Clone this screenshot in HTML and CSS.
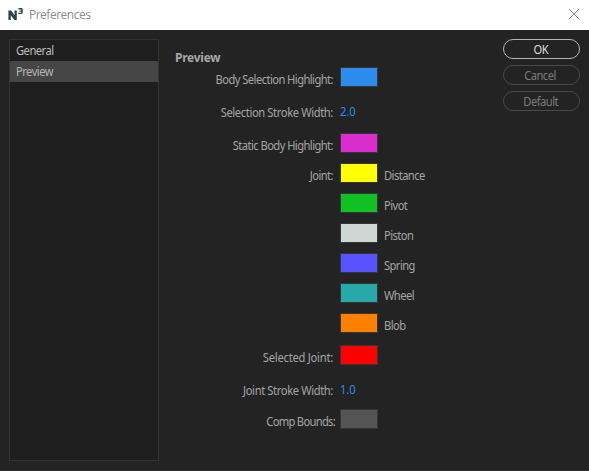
FILE: index.html
```html
<!DOCTYPE html>
<html lang="en">
<head>
<meta charset="utf-8">
<title>Preferences</title>
<link rel="stylesheet" href="styles.css">
</head>
<body>
<div class="window">
  <header class="titlebar">
    <svg class="logo" width="16" height="14" viewBox="0 0 16 14"><path d="M.4 3.4h2.8l3.3 4.8V3.4h2.3V13H6.2L2.8 8.2V13H.4z" fill="#2d444b"/><path d="M10.4 1.8h3.2l.4.5v1.3l-.6.5.6.5v1.3l-.4.5h-3.2M11.6 4.1h2" fill="none" stroke="#2d444b" stroke-width="1.4"/></svg>
    <h1 class="title">Preferences</h1>
    <svg class="close" width="12" height="12" viewBox="0 0 12 12"><path d="M1 1L11 11M11 1L1 11" fill="none" stroke="#888" stroke-width="1"/></svg>
  </header>
  <main class="content">
    <nav class="sidebar">
      <div class="item"><span class="narrow">General</span></div>
      <div class="item selected"><span class="narrow">Preview</span></div>
    </nav>
    <section class="panel">
      <h2 class="heading">Preview</h2>
      <div class="row gap13"><span class="label">Body Selection Highlight:</span><i class="swatch blue"></i></div>
      <div class="row gap13"><span class="label loose">Selection Stroke Width:</span><span class="value">2.0</span></div>
      <div class="row"><span class="label">Static Body Highlight:</span><i class="swatch magenta"></i></div>
      <div class="row"><span class="label">Joint:</span><i class="swatch yellow"></i><span class="name">Distance</span></div>
      <div class="row"><span class="label"></span><i class="swatch green"></i><span class="name">Pivot</span></div>
      <div class="row"><span class="label"></span><i class="swatch gray"></i><span class="name">Piston</span></div>
      <div class="row"><span class="label"></span><i class="swatch violet"></i><span class="name">Spring</span></div>
      <div class="row"><span class="label"></span><i class="swatch teal"></i><span class="name">Wheel</span></div>
      <div class="row gap12"><span class="label"></span><i class="swatch orange"></i><span class="name">Blob</span></div>
      <div class="row gap13"><span class="label looser">Selected Joint:</span><i class="swatch red"></i></div>
      <div class="row gap11"><span class="label loose">Joint Stroke Width:</span><span class="value">1.0</span></div>
      <div class="row"><span class="label wide">Comp Bounds:</span><i class="swatch dark"></i></div>
    </section>
    <aside class="actions">
      <button class="button primary"><span class="narrow">OK</span></button>
      <button class="button"><span class="narrow">Cancel</span></button>
      <button class="button"><span class="narrow">Default</span></button>
    </aside>
  </main>
</div>
</body>
</html>
```

FILE: styles.css
```css
* { box-sizing: border-box; }
body { margin: 0; background: #232323; }
.window {
  width: 589px; height: 471px; display: flex; flex-direction: column;
  overflow: hidden; border-bottom: 1px solid #302e2f;
  font-family: "Noto Sans", sans-serif;
  font-size: 12px; color: #a5a5a5;
}
.titlebar { height: 30px; flex: none; display: flex; background: #fff; padding: 0 9px 0 8px; }
.logo { margin-top: 7px; }
.title { margin: 0 auto 0 5px; font: 400 12px/30px "Open Sans", sans-serif; letter-spacing: -.5px; color: #8c8c8c; }
.close { margin-top: 8px; }
.content { flex: 1; display: flex; padding: 9px 9px 9px; }
.sidebar { width: 150px; height: 422px; border: 1px solid #323232; background: #1e1e1e; }
.narrow { display: inline-block; letter-spacing: -.55px; transform: scaleX(.93); }
.item { height: 21px; padding-left: 6px; line-height: 22px; color: #bdbdbd; }
.item .narrow { transform-origin: left; }
.item.selected { background: #464646; color: #b5b5b5; }
.panel { width: 300px; padding-left: 16px; }
.heading { margin: 0; height: 28px; font: 700 12px/38px "Noto Sans", sans-serif; letter-spacing: -.25px; color: #a8a8a8; }
.row { height: 20px; margin-bottom: 10px; display: flex; line-height: 26px; white-space: nowrap; }
.row.gap11 { margin-bottom: 11px; }
.row.gap12 { margin-bottom: 12px; }
.row.gap13 { margin-bottom: 13px; }
.label { width: 158px; margin-right: 7px; text-align: right; letter-spacing: -.6px; transform: scaleX(.93); transform-origin: right; }
.label.loose { letter-spacing: -.4px; }
.label.looser { letter-spacing: -.25px; }
.label.wide { width: 160px; margin-right: 5px; letter-spacing: -.75px; }
.swatch { width: 38px; height: 20px; border: 1px solid #363636; }
.name { margin-left: 6px; letter-spacing: -.6px; transform: scaleX(.93); transform-origin: left; }
.value { color: #2d8ceb; line-height: 24px; letter-spacing: -.1px; transform: scaleX(.93); transform-origin: left; }
.blue { background: #2d8ceb; }
.magenta { background: #d92dce; }
.yellow { background: #ff0; }
.green { background: #11c022; }
.gray { background: #ced7d3; }
.violet { background: #5653ff; }
.teal { background: #28a8a9; }
.orange { background: #ff8000; }
.red { background: #f00; }
.dark { background: #545454; }
.actions { width: 77px; margin-left: auto; display: flex; flex-direction: column; gap: 6px; }
.button {
  height: 20px; padding: 0 2px 0 0; border: 1px solid #4a4a4a; border-radius: 10px; background: transparent;
  font-family: inherit; font-size: 12px; line-height: 20px; color: #7b7b7b;
}
.button.primary { border-color: #b5b5b5; color: #ddd; }
```
